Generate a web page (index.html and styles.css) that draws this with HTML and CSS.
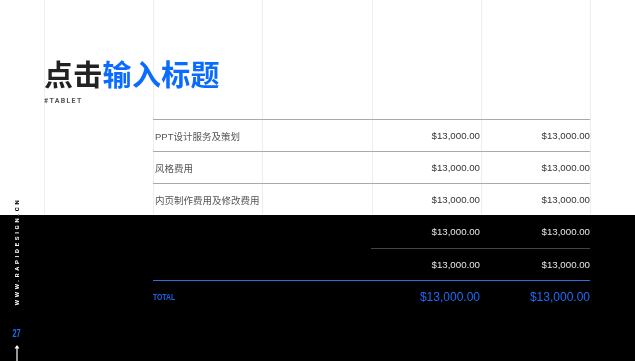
FILE: index.html
```html
<!DOCTYPE html>
<html lang="zh-CN">
<head>
<meta charset="utf-8">
<title>点击输入标题</title>
<link rel="stylesheet" href="styles.css">
</head>
<body>
<div class="page">
  <aside class="side">
    <div class="site">WWW.RAPIDESIGN.CN</div>
    <div class="pagenum">27</div>
    <svg class="arrow" width="8" height="17" viewBox="0 0 8 17">
      <path d="M4 2 L4 17" stroke="#fff" stroke-width="1.2" fill="none"/>
      <path d="M1.5 4.5 L4 1 L6.5 4.5 Z" fill="#fff"/>
    </svg>
  </aside>
  <main class="content">
    <header class="head">
      <h1 class="title"><span class="title-dark">点击</span><span class="title-blue">输入标题</span></h1>
      <div class="tag">#TABLET</div>
    </header>
    <div class="table">
      <div class="row row-light">
        <div class="cell label">PPT设计服务及策划</div>
        <div class="cell amount">$13,000.00</div>
        <div class="cell amount">$13,000.00</div>
      </div>
      <div class="row row-light">
        <div class="cell label">风格费用</div>
        <div class="cell amount">$13,000.00</div>
        <div class="cell amount">$13,000.00</div>
      </div>
      <div class="row row-light">
        <div class="cell label">内页制作费用及修改费用</div>
        <div class="cell amount">$13,000.00</div>
        <div class="cell amount">$13,000.00</div>
      </div>
      <div class="row row-dark row-first-dark">
        <div class="cell label"></div>
        <div class="cell amount">$13,000.00</div>
        <div class="cell amount">$13,000.00</div>
      </div>
      <div class="row row-dark">
        <div class="cell label"></div>
        <div class="cell amount amount-ruled">$13,000.00</div>
        <div class="cell amount amount-ruled">$13,000.00</div>
      </div>
      <div class="row row-total">
        <div class="cell label total-label"><span class="total-text">TOTAL</span></div>
        <div class="cell amount total-amount">$13,000.00</div>
        <div class="cell amount total-amount">$13,000.00</div>
      </div>
    </div>
  </main>
</div>
</body>
</html>
```
FILE: styles.css
```css
* { box-sizing: border-box; margin: 0; padding: 0; }

html, body {
  width: 635px;
  height: 361px;
  overflow: hidden;
  background: #000;
}

.page {
  position: relative;
  isolation: isolate;
  width: 635px;
  height: 361px;
  display: flex;
  background:
    repeating-linear-gradient(to right, #eeeeee 0 1px, transparent 1px 109.2px) 44px 0 / 548px 215px no-repeat,
    linear-gradient(to bottom, #ffffff 0, #ffffff 215px, #000000 215px, #000000 100%);
  font-family: "Liberation Sans", "Noto Sans CJK SC", sans-serif;
}

/* left rail */
.side {
  width: 44px;
  padding-right: 10px;
  padding-top: 193px;
  display: flex;
  flex-direction: column;
  align-items: center;
}

.site {
  writing-mode: vertical-rl;
  transform: rotate(180deg);
  font-family: Roboto, "Liberation Sans", sans-serif;
  font-weight: 700;
  font-size: 6px;
  letter-spacing: 2.7px;
  line-height: 6px;
  color: #fff;
  mix-blend-mode: difference;
  height: 113px;
}

.pagenum {
  margin-top: 24px;
  font-family: "Liberation Sans", sans-serif;
  font-weight: 700;
  font-size: 10px;
  line-height: 10px;
  color: #1f6df2;
  transform: scaleX(0.75);
}

.arrow {
  display: block;
  margin-top: 5px;
}

/* main */
.content {
  flex: 1;
  padding-top: 57px;
}

.title {
  font-family: "Noto Sans CJK SC", sans-serif;
  font-weight: 700;
  font-size: 29px;
  line-height: 32px;
  letter-spacing: 0.3px;
}
.title-dark { color: #222222; }
.title-blue { color: #0a6bff; }

.tag {
  margin-top: 8px;
  font-family: Roboto, "Liberation Sans", sans-serif;
  font-weight: 700;
  font-size: 7px;
  line-height: 8px;
  letter-spacing: 1.3px;
  color: #555;
}

.table {
  margin-top: 14px;
  margin-left: 109px;
  width: 437px;
}

.row {
  display: grid;
  grid-template-columns: 218px 109px 110px;
  height: 32px;
}

.row-light {
  border-top: 1px solid #a9a9a9;
}

.row-first-dark { height: 33px; }

.cell {
  display: flex;
  align-items: center;
  font-size: 9.7px;
}

.label {
  padding-left: 2px;
  color: #555;
  font-size: 9.5px;
}

.amount {
  justify-content: flex-end;
  color: #333;
}

.row-dark .amount { color: #e6e6e6; }

.amount-ruled {
  border-top: 1px solid #444;
}
.row-dark .amount-ruled:first-of-type { margin-left: 1px; }

.row-total {
  border-top: 1px solid #2f6fd9;
  height: 33px;
}

.total-label {
  padding-left: 0;
}

.total-text {
  display: inline-block;
  font-family: "Liberation Sans", sans-serif;
  font-weight: 700;
  font-size: 8.5px;
  color: #1a66e6;
  transform: scaleX(0.8);
  transform-origin: left center;
}

.total-amount {
  font-size: 12px;
  color: #1a6cf5;
}
```
